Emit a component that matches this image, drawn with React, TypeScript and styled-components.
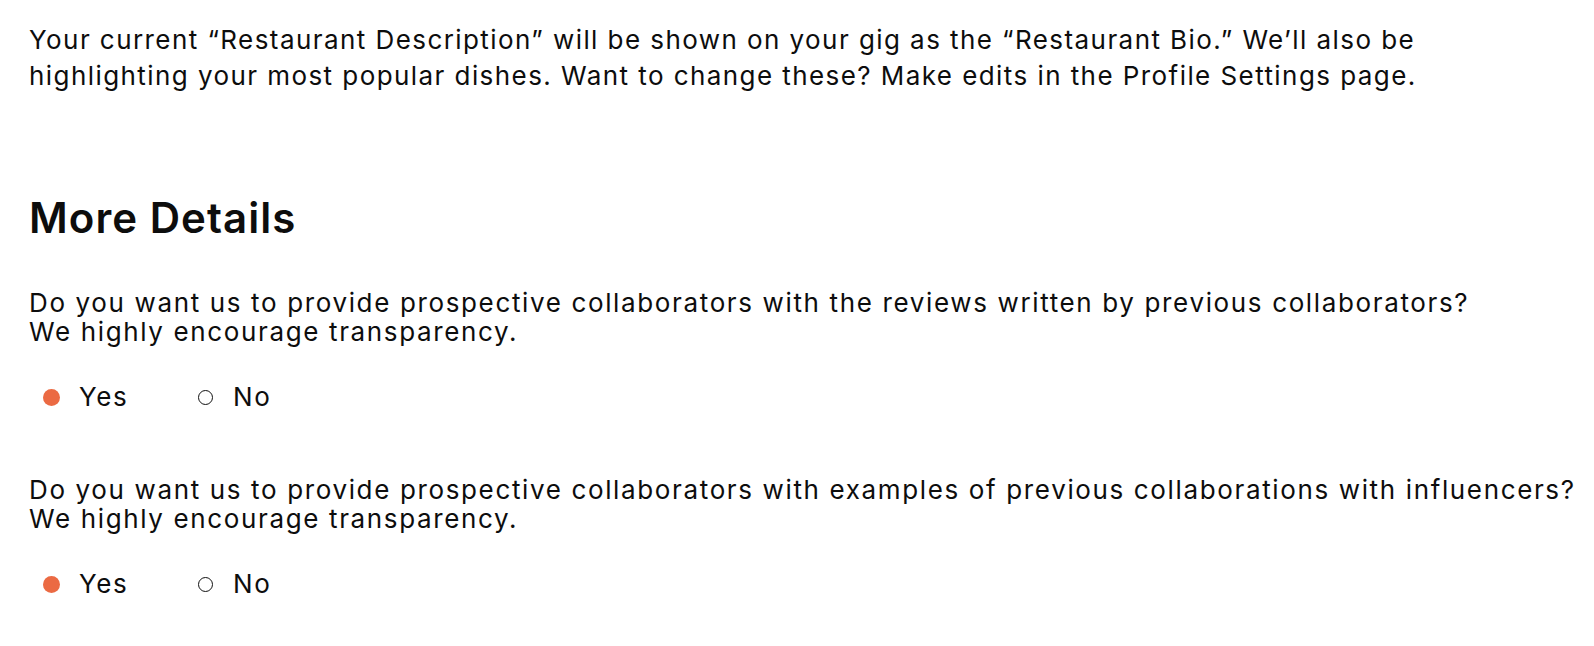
import { createGlobalStyle } from "styled-components";
import styled from "styled-components";

const GlobalStyle = createGlobalStyle`
  body {
    margin: 0;
    background: #ffffff;
    color: #0d0d0d;
    font-family: Inter, "Noto Sans", sans-serif;
  }
`;

type Question = {
  id: number;
  lines: string[];
  answer: "yes" | "no";
};

const questions: Question[] = [
  {
    id: 1,
    lines: [
      "Do you want us to provide prospective collaborators with the reviews written by previous collaborators?",
      "We highly encourage transparency.",
    ],
    answer: "yes",
  },
  {
    id: 2,
    lines: [
      "Do you want us to provide prospective collaborators with examples of previous collaborations with influencers?",
      "We highly encourage transparency.",
    ],
    answer: "yes",
  },
];

function App() {
  return (
    <>
      <GlobalStyle />
      <Spage>
        <Sintro>
          Your current “Restaurant Description” will be shown on your gig as the “Restaurant Bio.” We’ll also be
          <br />
          highlighting your most popular dishes. Want to change these? Make edits in the Profile Settings page.
        </Sintro>

        <Sheading>More Details</Sheading>

        {questions.map((q) => (
          <Squestion key={q.id}>
            <Sprompt>
              {q.lines[0]}
              <br />
              {q.lines[1]}
            </Sprompt>
            <Sradios>
              <Soption>
                <Sdot $checked={q.answer === "yes"} />
                Yes
              </Soption>
              <Soption>
                <Sdot $checked={q.answer === "no"} />
                No
              </Soption>
            </Sradios>
          </Squestion>
        ))}
      </Spage>
    </>
  );
}
export default App;

const Spage = styled.div`
  padding: 22px 0 0 29px;
  white-space: nowrap;
`;

const Sintro = styled.p`
  margin: 0;
  font-size: 26px;
  line-height: 36px;
  letter-spacing: 0.055em;
`;

const Sheading = styled.h2`
  margin: 100px 0 0;
  font-size: 42px;
  line-height: 48px;
  font-weight: 600;
  letter-spacing: 0.025em;
`;

const Squestion = styled.section`
  margin-top: 47px;
  & + & {
    margin-top: 65px;
  }
`;

const Sprompt = styled.p`
  margin: 0;
  font-size: 26px;
  line-height: 28.5px;
  letter-spacing: 0.063em;
`;

const Sradios = styled.div`
  display: grid;
  grid-template-columns: 154px auto;
  justify-content: start;
  margin-top: 37px;
  padding-left: 14px;
`;

const Soption = styled.label`
  display: flex;
  align-items: center;
  gap: 19px;
  font-size: 26px;
  line-height: 28px;
  letter-spacing: 0.06em;
`;

const Sdot = styled.span<{ $checked: boolean }>`
  display: inline-block;
  box-sizing: border-box;
  flex: none;
  width: 17px;
  height: 17px;
  border-radius: 50%;
  background: ${(p) => (p.$checked ? "#eb6a43" : "transparent")};
  border: ${(p) => (p.$checked ? "none" : "1.7px solid #111")};
  ${(p) => (p.$checked ? "" : "width: 15px; height: 15px; margin: 0 1px;")}
`;
